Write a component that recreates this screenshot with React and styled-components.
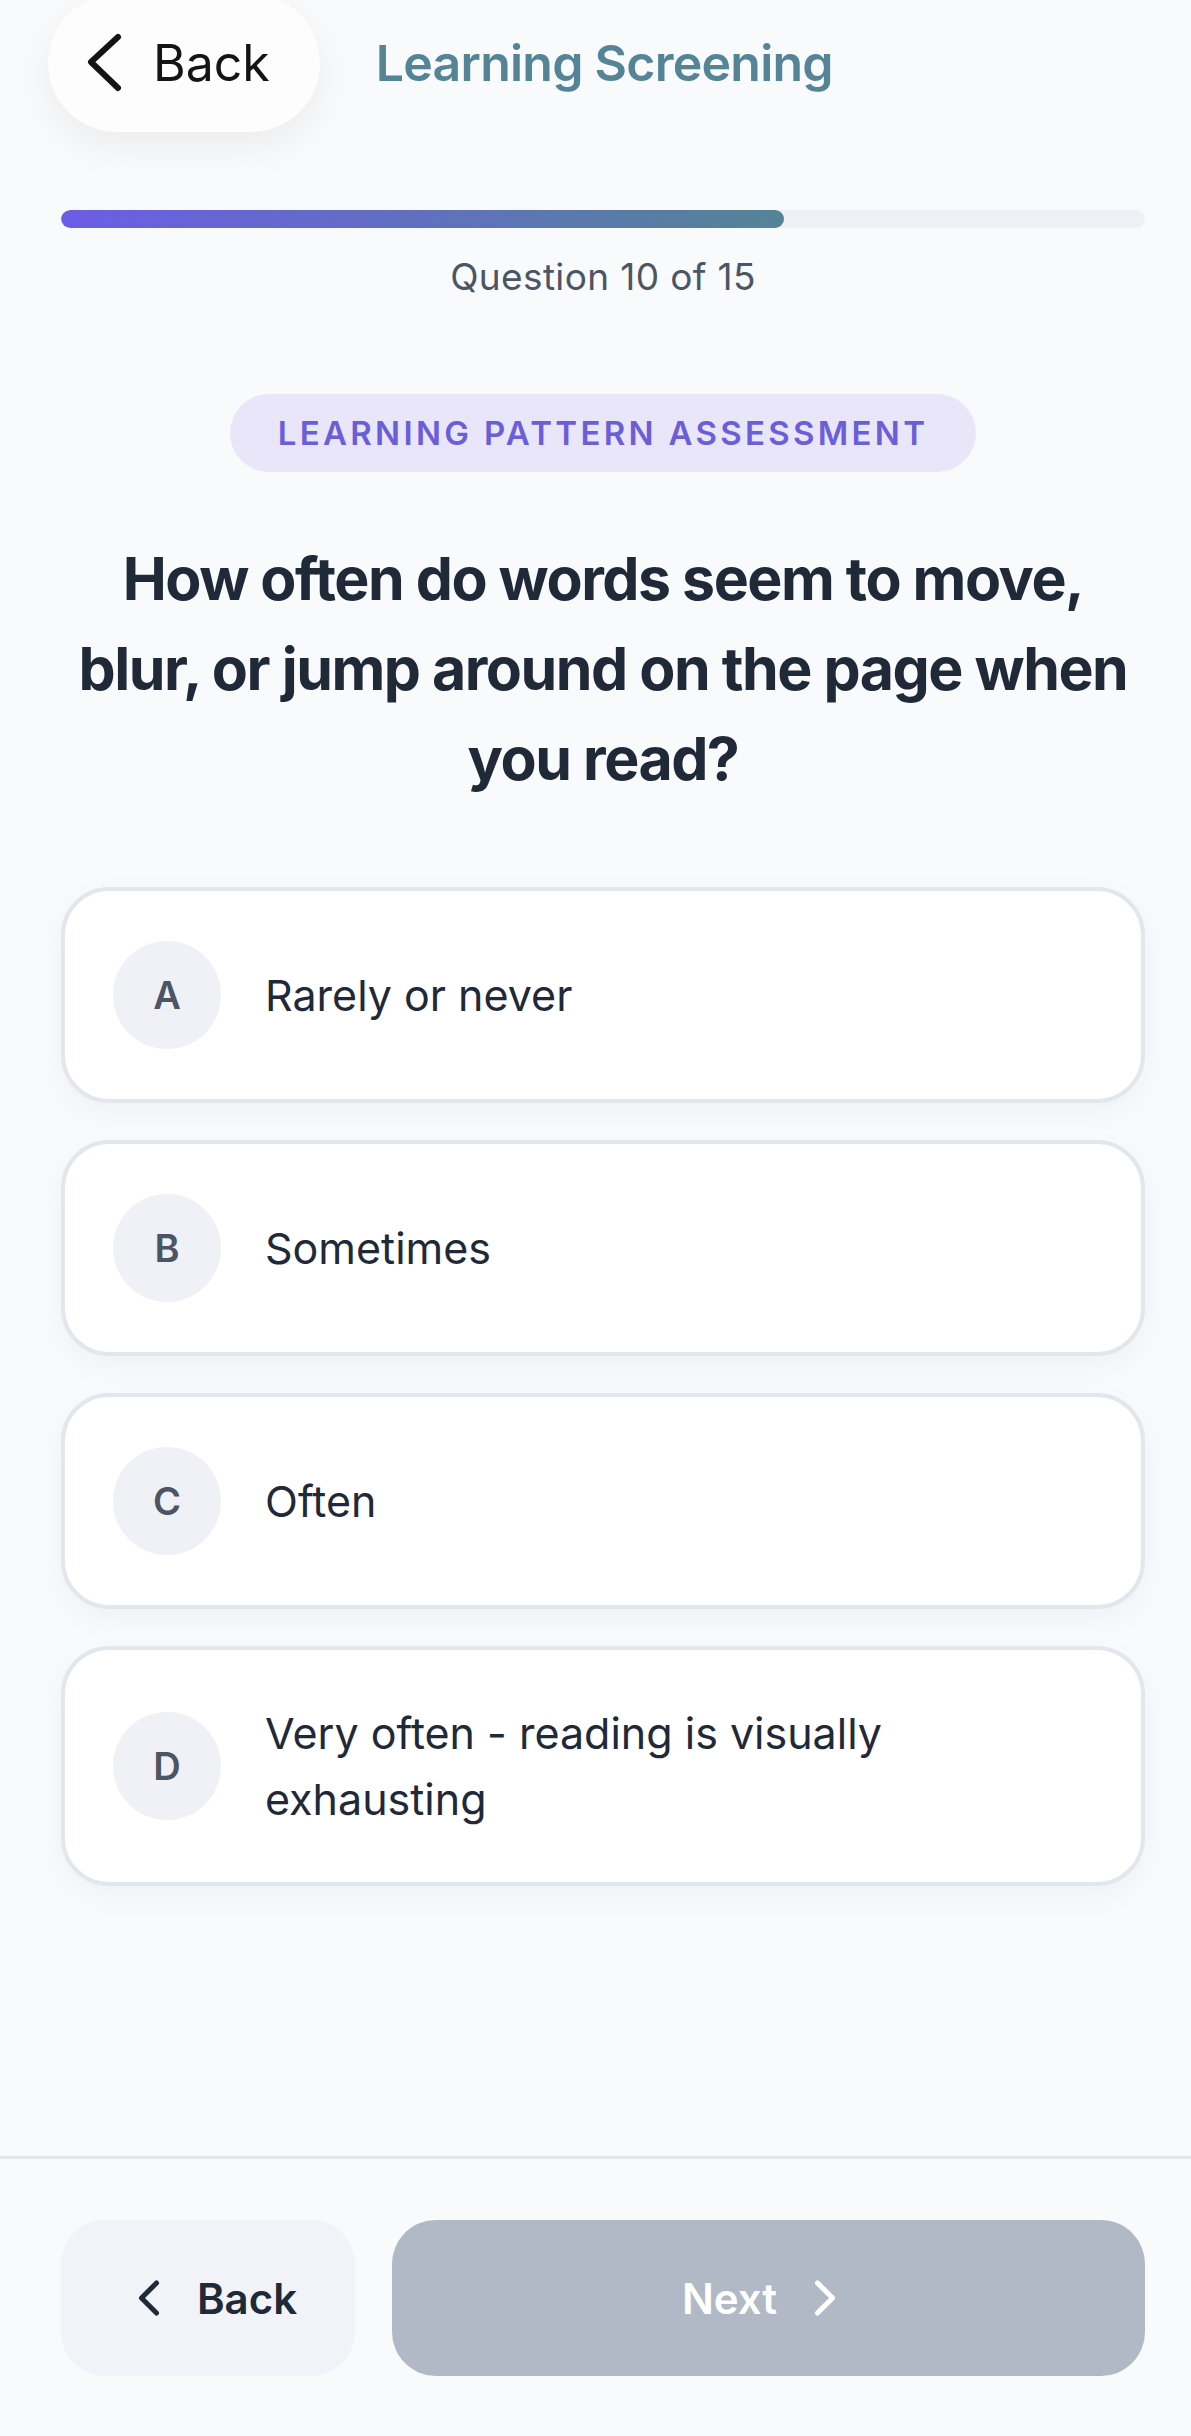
import React from "react";
import styled, { createGlobalStyle } from "styled-components";
import { ChevronLeft, ChevronRight } from "lucide-react";

const GlobalStyle = createGlobalStyle`
  html, body {
    margin: 0;
    padding: 0;
    background: #f9fafb;
  }
  body {
    font-family: Inter, "Noto Sans", "Liberation Sans", sans-serif;
    color: #1f2937;
  }
  * {
    box-sizing: border-box;
  }
`;

const options = [
  { key: "A", label: "Rarely or never" },
  { key: "B", label: "Sometimes" },
  { key: "C", label: "Often" },
  { key: "D", label: "Very often - reading is visually exhausting" },
];

const current = 10;
const total = 15;

const App = () => {
  return (
    <>
      <GlobalStyle />
      <Page>
        <Header>
          <NavBack>
            <svg width="40" height="64" viewBox="0 0 40 64" fill="none">
              <polyline
                points="33,6 6,31 33,57"
                stroke="#141414"
                strokeWidth="6"
                strokeLinecap="round"
                strokeLinejoin="round"
              />
            </svg>
            <span>Back</span>
          </NavBack>
          <Title>Learning Screening</Title>
        </Header>

        <Main>
          <Track>
            <Fill style={{ width: `${(current / total) * 100}%` }} />
          </Track>
          <Counter>
            Question {current} of {total}
          </Counter>

          <Category>Learning Pattern Assessment</Category>

          <Question>
            How often do words seem to move, blur, or jump around on the page
            when you read?
          </Question>

          <Options>
            {options.map((o) => (
              <Option key={o.key}>
                <Letter>{o.key}</Letter>
                <OptionText>{o.label}</OptionText>
              </Option>
            ))}
          </Options>
        </Main>

        <Footer>
          <BackButton>
            <ChevronLeft size={60} strokeWidth={2} />
            <span>Back</span>
          </BackButton>
          <NextButton disabled>
            <span>Next</span>
            <ChevronRight size={60} strokeWidth={2} />
          </NextButton>
        </Footer>
      </Page>
    </>
  );
};

const Page = styled.div`
  min-height: 100vh;
  display: flex;
  flex-direction: column;
  background: #f9fafb;
`;

const Header = styled.header`
  display: flex;
  align-items: center;
  gap: 56px;
  padding: 0 46px 0 48px;
  margin-top: -6px;
`;

const NavBack = styled.button`
  display: flex;
  align-items: center;
  gap: 28px;
  height: 138px;
  padding: 0 50px 0 37px;
  border: none;
  border-radius: 69px;
  background: #fdfdfd;
  box-shadow: 0 14px 40px rgba(20, 20, 40, 0.06);
  font-family: inherit;
  font-size: 50px;
  font-weight: 400;
  color: #141414;
  svg {
    display: block;
  }
`;

const Title = styled.h1`
  margin: 0;
  font-size: 50px;
  font-weight: 600;
  color: #548496;
  letter-spacing: -0.015em;
`;

const Main = styled.main`
  flex: 1;
  display: flex;
  flex-direction: column;
  align-items: center;
  padding: 78px 46px 80px 61px;
`;

const Track = styled.div`
  width: 100%;
  height: 18px;
  border-radius: 9px;
  background: #eef0f5;
  overflow: hidden;
`;

const Fill = styled.div`
  height: 100%;
  border-radius: 9px;
  background: linear-gradient(90deg, #6c5ce7 0%, #548496 100%);
`;

const Counter = styled.div`
  margin-top: 26px;
  font-size: 37px;
  letter-spacing: 0.01em;
  color: #4b5563;
`;

const Category = styled.div`
  margin-top: 95px;
  height: 78px;
  display: flex;
  align-items: center;
  padding: 0 48px;
  border-radius: 39px;
  background: #e9e6f9;
  color: #6c5ed8;
  font-size: 33px;
  font-weight: 600;
  letter-spacing: 0.1em;
  text-transform: uppercase;
`;

const Question = styled.h2`
  margin: 62px 0 0;
  max-width: 1060px;
  text-align: center;
  font-size: 59px;
  line-height: 90px;
  font-weight: 700;
  letter-spacing: -0.025em;
  color: #1f2937;
`;

const Options = styled.div`
  width: 100%;
  margin-top: 83px;
  display: flex;
  flex-direction: column;
  gap: 37px;
`;

const Option = styled.button`
  display: flex;
  align-items: center;
  gap: 44px;
  width: 100%;
  padding: 50px 48px;
  border: 4px solid #e2e7eb;
  border-radius: 48px;
  background: #ffffff;
  box-shadow: 0 10px 30px rgba(15, 23, 42, 0.04);
  font-family: inherit;
  text-align: left;
  cursor: pointer;
`;

const Letter = styled.span`
  flex-shrink: 0;
  width: 108px;
  height: 108px;
  border-radius: 50%;
  display: flex;
  align-items: center;
  justify-content: center;
  background: #eff1f6;
  color: #4b5563;
  font-size: 38px;
  font-weight: 600;
`;

const OptionText = styled.span`
  font-size: 43px;
  line-height: 66px;
  color: #1f2937;
  max-width: 640px;
`;

const Footer = styled.footer`
  display: flex;
  gap: 37px;
  padding: 61px 46px 60px 61px;
  border-top: 3px solid #e3e7eb;
`;

const FooterButton = styled.button`
  height: 156px;
  display: flex;
  align-items: center;
  justify-content: center;
  gap: 18px;
  border: none;
  border-radius: 44px;
  font-family: inherit;
  font-size: 42px;
  font-weight: 600;
  svg {
    display: block;
  }
`;

const BackButton = styled(FooterButton)`
  width: 294px;
  flex-shrink: 0;
  background: #f1f3f8;
  color: #1f2937;
`;

const NextButton = styled(FooterButton)`
  flex: 1;
  background: #b2b9c6;
  color: #ffffff;
`;

export default App;
